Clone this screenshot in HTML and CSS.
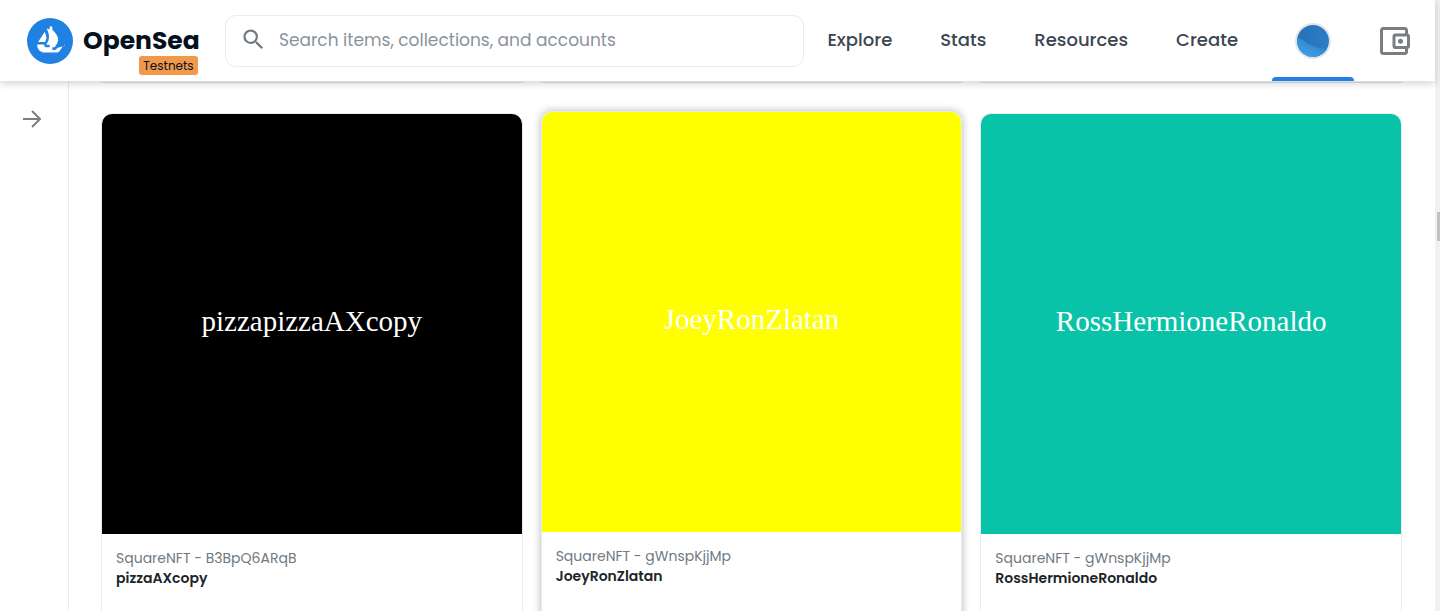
FILE: index.html
```html
<!DOCTYPE html>
<html lang="en">
<head>
<meta charset="utf-8">
<meta name="viewport" content="width=device-width, initial-scale=1">
<title>OpenSea Testnets</title>
<link rel="stylesheet" href="styles.css">
</head>
<body>
<div class="page">
  <header class="header">
    <a class="brand" href="#">
      <svg class="brand-logo" viewBox="0 0 90 90" aria-hidden="true">
        <circle cx="45" cy="45" r="45" fill="#2081e2"/>
        <path fill="#fff" d="M22.2 46.5l.2-.3 11.7-18.3c.2-.3.6-.2.8.1 2 4.400 3.600 9.800 2.900 13.200-.3 1.400-1.200 3.300-2.200 5-.1.200-.3.500-.4.700-.1.100-.2.100-.4.100H22.600c-.4 0-.6-.3-.4-.5z"/>
        <path fill="#fff" d="M74.400 49.900v2.800c0 .2-.1.300-.2.400-.9.400-3.900 1.800-5.200 3.500-3.200 4.500-5.700 10.900-11.200 10.900H34.700c-8.200 0-14.800-6.700-14.800-14.900v-.3c0-.2.200-.4.400-.4h12.900c.3 0 .4.200.4.500-.1.800.1 1.700.500 2.400.7 1.500 2.200 2.400 3.900 2.400h6.300v-5h-6.300c-.3 0-.5-.4-.3-.6l.2-.4c.6-.8 1.400-2.200 2.300-3.700.6-1 1.200-2.100 1.600-3.200l.3-.8c.9-3.400 1.100-7.100.7-10.300-.3-2.600-1-5.100-2-7.500-.4-1-1-2.100-1.500-3.100-.3-.6-.5-1.200-.8-1.600-.1-.3.100-.5.400-.4l5.400 1.700v-3.300c0-1.600 1.200-2.900 2.700-2.900s2.700 1.300 2.700 2.900v4.800l.6.200.100.100c.8.600 2 1.700 3.400 3.100 1.100 1.200 2.100 2.500 3.100 3.900 4.400 6.300 5.100 11.700 2.700 17.300-.9 2.100-2.100 4.200-3.500 6.200-.6.800-1.200 1.500-1.800 2.200-.2.300 0 .6.300.6h-5v5h4.700c1.100 0 2.100-.4 2.900-1.100.3-.2 1.500-1.300 2.900-2.900l.2-.1 12.700-3.700c.300-.1.600.1.600.400z"/>
      </svg>
      <span class="brand-text">
        <span class="brand-name">OpenSea</span>
        <span class="brand-badge">Testnets</span>
      </span>
    </a>
    <form class="search" role="search">
      <svg class="search-icon" viewBox="0 0 24 24" aria-hidden="true">
        <path fill="currentColor" d="M15.500 14h-.79l-.28-.27A6.470 6.470 0 0 0 16 9.500 6.500 6.500 0 1 0 9.500 16c1.610 0 3.090-.59 4.230-1.570l.27.28v.79l5 4.990L20.490 19l-4.990-5zm-6 0C7.010 14 5 11.990 5 9.500S7.010 5 9.500 5 14 7.010 14 9.500 11.990 14 9.500 14z"/>
      </svg>
      <input class="search-input" type="search" aria-label="Search" placeholder="Search items, collections, and accounts">
    </form>
    <nav class="nav">
      <a class="nav-link" href="#">Explore</a>
      <a class="nav-link" href="#">Stats</a>
      <a class="nav-link" href="#">Resources</a>
      <a class="nav-link" href="#">Create</a>
    </nav>
    <button class="account" type="button" aria-label="Account">
      <svg class="avatar" viewBox="0 0 36 36" aria-hidden="true">
        <defs>
          <linearGradient id="sky" x1="0" y1="0" x2="1" y2="0.400">
            <stop offset="0" stop-color="#2370b8"/>
            <stop offset="1" stop-color="#2d7dc4"/>
          </linearGradient>
          <linearGradient id="wave" x1="0.200" y1="1" x2="0.900" y2="0.200">
            <stop offset="0" stop-color="#45a5e8"/>
            <stop offset="1" stop-color="#2a7fc8"/>
          </linearGradient>
          <clipPath id="disc"><circle cx="18" cy="18" r="16"/></clipPath>
        </defs>
        <circle cx="18" cy="18" r="17" fill="#fff" stroke="#e2e5e8" stroke-width="2"/>
        <g clip-path="url(#disc)">
          <path fill="url(#sky)" d="M0 0h36v36H0z"/>
          <path fill="url(#wave)" d="M0 16c5-2 8 1 12 4s12 6 24 6v10H0z"/>
        </g>
      </svg>
    </button>
    <button class="wallet" type="button" aria-label="Wallet">
      <svg class="wallet-icon" viewBox="0 0 30 28" fill="none" stroke="currentColor" stroke-width="3" aria-hidden="true">
        <path d="M26.500 7V3a1.500 1.500 0 0 0-1.500-1.500H3A1.500 1.500 0 0 0 1.500 3v22A1.500 1.500 0 0 0 3 26.500h22a1.500 1.500 0 0 0 1.500-1.500v-4"/>
        <rect x="14" y="8" width="14.500" height="12.500" rx="1.500"/>
        <circle cx="20.500" cy="14.200" r="2.500" fill="currentColor" stroke="none"/>
      </svg>
    </button>
  </header>

  <div class="content">
    <aside class="sidebar">
      <button class="expand" type="button" aria-label="Show filters">
        <svg class="expand-icon" viewBox="0 0 18 18" fill="none" stroke="currentColor" stroke-width="2" aria-hidden="true">
          <path d="M0 9h17M9 1l8 8-8 8"/>
        </svg>
      </button>
    </aside>
    <main class="results">
      <div class="row row-previous" aria-hidden="true">
        <div class="card-end"></div>
        <div class="card-end"></div>
        <div class="card-end"></div>
      </div>
      <div class="row">
        <article class="card">
          <div class="art art-black">pizzapizzaAXcopy</div>
          <div class="details">
            <a class="collection" href="#">SquareNFT - B3BpQ6ARqB</a>
            <h2 class="title">pizzaAXcopy</h2>
          </div>
        </article>
        <article class="card card-raised">
          <div class="art art-yellow">JoeyRonZlatan</div>
          <div class="details">
            <a class="collection" href="#">SquareNFT - gWnspKjjMp</a>
            <h2 class="title">JoeyRonZlatan</h2>
          </div>
        </article>
        <article class="card">
          <div class="art art-teal">RossHermioneRonaldo</div>
          <div class="details">
            <a class="collection" href="#">SquareNFT - gWnspKjjMp</a>
            <h2 class="title">RossHermioneRonaldo</h2>
          </div>
        </article>
      </div>
    </main>
  </div>
</div>
<div class="scroll-track"><div class="scroll-thumb"></div></div>
</body>
</html>
```
FILE: styles.css
```css
* {
  box-sizing: border-box;
}

body {
  margin: 0;
  height: 100vh;
  display: flex;
  overflow: hidden;
  background: #fff;
  color: #04111d;
  font-family: Poppins, Inter, sans-serif;
}

a {
  color: inherit;
  text-decoration: none;
}

button {
  border: 0;
  padding: 0;
  background: none;
  cursor: pointer;
}

svg {
  display: block;
}

.page {
  flex: 1;
  min-width: 0;
  display: flex;
  flex-direction: column;
}

.header {
  position: relative;
  z-index: 2;
  flex: none;
  display: flex;
  align-items: center;
  height: 81px;
  padding-left: 27px;
  background: #fff;
  box-shadow: 0 2px 8px rgba(4, 17, 29, 0.2);
}

.brand {
  display: flex;
  align-items: center;
  gap: 10px;
  width: 198px;
}

.brand-logo {
  width: 46px;
  height: 46px;
}

.brand-text {
  position: relative;
}

.brand-name {
  font-size: 25px;
  line-height: 36px;
  font-weight: 700;
}

.brand-badge {
  position: absolute;
  top: 33px;
  right: 2px;
  padding: 0 4px;
  border-radius: 3px;
  background: #f1984a;
  font-size: 12px;
  line-height: 19px;
}

.search {
  flex: 1;
  display: flex;
  align-items: center;
  gap: 12px;
  height: 52px;
  padding: 0 14px 2px;
  border: 1px solid #e8ecee;
  border-radius: 11px;
}

.search-icon {
  width: 27px;
  height: 27px;
  color: #707a83;
}

.search-input {
  flex: 1;
  min-width: 0;
  padding: 0;
  border: 0;
  outline: 0;
  background: none;
  font: 400 17px/28px Poppins, Inter, sans-serif;
}

.search-input::placeholder {
  color: #8a939b;
}

.nav {
  display: flex;
  gap: 48px;
  margin: 0 34px 0 23px;
  padding-bottom: 1px;
  color: #3c4650;
  font-size: 18px;
  line-height: 28px;
  font-weight: 500;
}

.account {
  align-self: stretch;
  display: flex;
  align-items: center;
  justify-content: center;
  width: 82px;
  position: relative;
}

.account::after {
  content: "";
  position: absolute;
  left: 0;
  right: 0;
  bottom: 0;
  height: 4px;
  border-radius: 4px 4px 0 0;
  background: #2081e2;
}

.avatar {
  width: 36px;
  height: 36px;
}

.wallet {
  margin: 0 25px 0 26px;
  color: #7a7d82;
}

.wallet-icon {
  width: 30px;
  height: 28px;
}

.content {
  flex: 1;
  min-height: 0;
  display: flex;
}

.sidebar {
  flex: none;
  width: 69px;
  padding: 29px 0 0 23px;
  border-right: 1px solid #e8ebed;
}

.expand {
  color: #7b7f83;
}

.expand-icon {
  width: 18px;
  height: 18px;
}

.results {
  flex: 1;
  min-width: 0;
  padding: 0 33px 0 32px;
}

.row {
  display: grid;
  grid-template-columns: repeat(3, 1fr);
  gap: 18px;
}

.row-previous {
  margin-bottom: 30px;
}

.card-end {
  height: 2px;
  border: 1px solid #dfe3e6;
  border-top: 0;
  border-radius: 0 0 10px 10px;
}

.card {
  border: 1px solid #e8ebed;
  border-radius: 11px;
  overflow: hidden;
  background: #fff;
}

.card-raised {
  position: relative;
  top: -2px;
  box-shadow: 0 0 9px rgba(4, 17, 29, 0.3);
}

.art {
  display: flex;
  align-items: center;
  justify-content: center;
  aspect-ratio: 1;
  padding-bottom: 5px;
  color: #fff;
  font-family: "Liberation Serif", serif;
  font-size: 29px;
  line-height: 36px;
}

.art-black {
  background: #000;
}

.art-yellow {
  background: #ff0;
}

.art-teal {
  background: #09c3a9;
}

.details {
  padding: 14px 14px 40px;
  font-size: 14px;
  line-height: 20px;
}

.collection {
  display: block;
  color: #707a83;
}

.title {
  margin: 0;
  font-size: 14px;
  line-height: 20px;
  font-weight: 600;
  color: #202428;
}

.scroll-track {
  flex: none;
  width: 5px;
  padding: 212px 0 0 2px;
  background: #f0f1f2;
}

.scroll-thumb {
  height: 29px;
  background: #bfc3c5;
}
```
